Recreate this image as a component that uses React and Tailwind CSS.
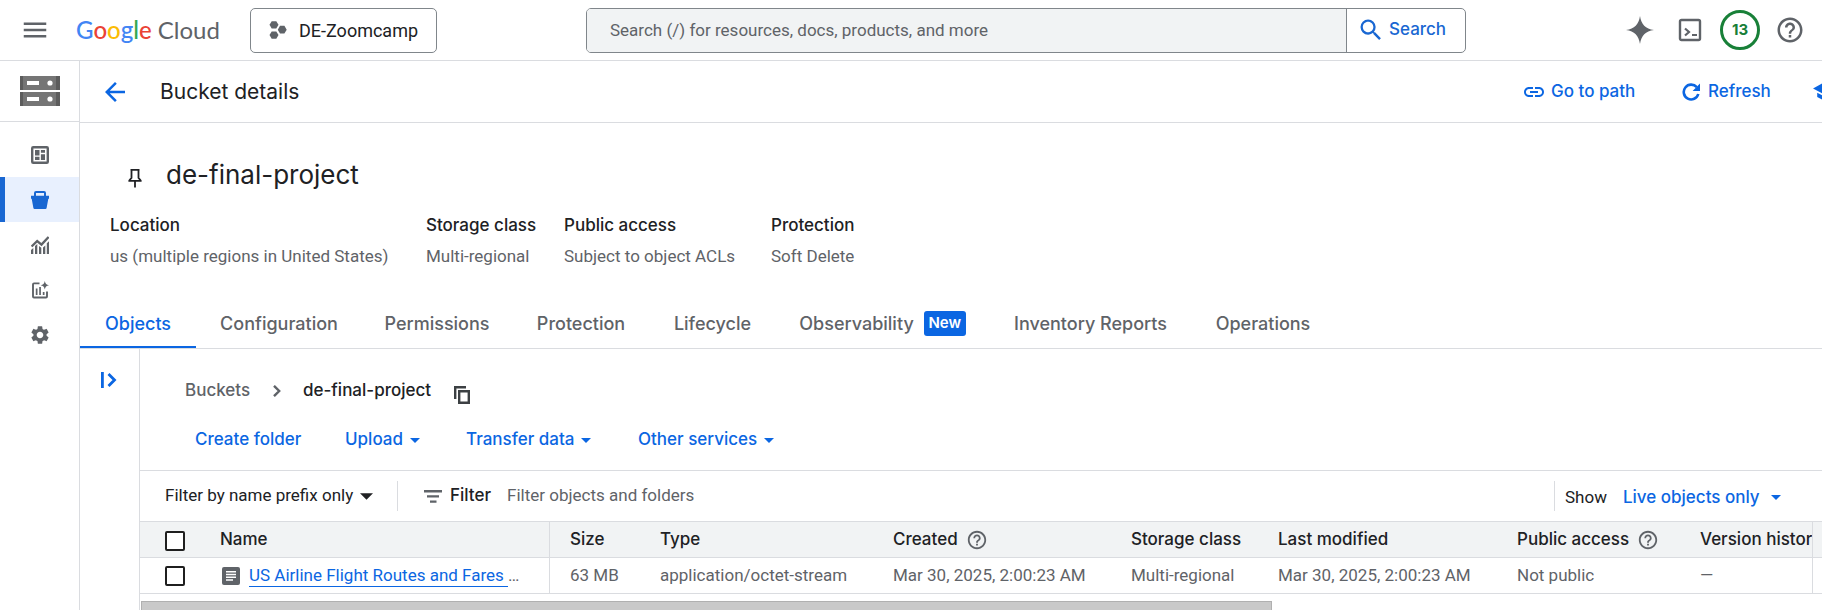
import { useState } from "react";
import {
  MdArrowBack,
  MdHelpOutline,
  MdLink,
  MdMenu,
  MdSchool,
  MdSearch,
  MdSettings,
} from "react-icons/md";

const ui = "font-['Inter','Liberation_Sans',sans-serif]";

function Caret({ className = "" }) {
  return (
    <svg viewBox="0 0 10 5" className={className} fill="currentColor" aria-hidden="true">
      <path d="M0 0h10L5 5z" />
    </svg>
  );
}

function ProjectDots() {
  return (
    <svg viewBox="0 0 18 20" className="h-5 w-[18px] shrink-0 text-[#5f6368]" fill="currentColor" aria-hidden="true">
      <path d="M2.700 1.200h4.600l2.200 3.600-2.200 3.700H2.700L.5 4.800z" />
      <path d="M2.700 11.400h4.600l2.200 3.600-2.200 3.700H2.700L.5 15z" />
      <path d="M11 5.800h4.400l2.300 3.900-2.300 3.800H11L8.800 9.700z" />
    </svg>
  );
}

function Sparkle() {
  return (
    <svg viewBox="0 0 28 28" className="size-7" fill="currentColor" aria-hidden="true">
      <path d="M14 0c1.200 8.500 5.500 12.800 14 14-8.500 1.200-12.800 5.500-14 14-1.200-8.500-5.500-12.800-14-14 8.500-1.200 12.800-5.500 14-14z" />
    </svg>
  );
}

function Terminal() {
  return (
    <svg viewBox="0 0 24 24" className="size-6" fill="none" stroke="currentColor" strokeWidth="2.400" aria-hidden="true">
      <rect x="2" y="2" width="20" height="20" rx="1.500" />
      <path d="M7 10.500l4 3.500-4 3.500M14 17h5" strokeWidth="2.200" />
    </svg>
  );
}

function PinIcon() {
  return (
    <svg viewBox="0 0 14 20" className="h-5 w-[14px]" fill="none" stroke="currentColor" strokeWidth="1.800" aria-hidden="true">
      <path d="M2.500 1.900h9M3.500 1.900v8L1.300 12.500v.4h11.400v-.4l-2.200-2.600v-8M7 13v6.500" />
    </svg>
  );
}

function StorageLogo() {
  return (
    <svg viewBox="0 0 40 30" className="h-[30px] w-10" aria-hidden="true">
      <path d="M0 0h40v14H0zM0 16h40v14H0z" fill="#757575" />
      <path d="M0 0h3v14H0zM36 0h4v14h-4zM0 16h3v14H0zM36 16h4v14h-4z" fill="#5c5c5c" />
      <path d="M7 5h12v4H7zM7 21h12v4H7z" fill="#fff" />
      <circle cx="30" cy="7" r="2.600" fill="#fff" />
      <circle cx="30" cy="23" r="2.600" fill="#fff" />
    </svg>
  );
}

function DashboardIcon() {
  return (
    <svg viewBox="0 0 18 18" className="size-[18px]" aria-hidden="true">
      <rect x="1.200" y="1.200" width="15.600" height="15.600" rx="1" fill="none" stroke="currentColor" strokeWidth="2.400" />
      <path d="M4 4h4.500v5.400H4zM4 10.800h4.500V14H4zM9.900 4H14v2.800H9.900zM9.900 8.200H14V14H9.900z" fill="currentColor" />
    </svg>
  );
}

function BucketIcon() {
  return (
    <svg viewBox="0 0 18 18" className="size-[18px]" fill="currentColor" fillRule="evenodd" aria-hidden="true">
      <path d="M5 0h8a2 2 0 0 1 2 2v2.800h3v3h-.7L15.600 17a1.200 1.200 0 0 1-1.200 1H3.600a1.200 1.200 0 0 1-1.200-1L.7 7.800H0v-3h3V2a2 2 0 0 1 2-2zm0 2v2.800h8V2z" />
    </svg>
  );
}

function MonitoringIcon() {
  return (
    <svg viewBox="0 0 18 18" className="size-[18px]" aria-hidden="true">
      <path d="M.6 10.500L6.200 5l4.300 3.600L17.600 1" fill="none" stroke="currentColor" strokeWidth="2.400" />
      <path d="M0 14l2.300-2v6H0zM4 10l2.300-2v10H4zM8 10l2.300 1.700V18H8zM12 11.400l2.300-2V18H12zM15.800 7.200l2.200-2V18h-2.200z" fill="currentColor" />
    </svg>
  );
}

function InsightsIcon() {
  return (
    <svg viewBox="0 0 18 18" className="size-[18px]" aria-hidden="true">
      <path d="M8.500 2.400H3a1 1 0 0 0-1 1V15.500a1 1 0 0 0 1 1h12a1 1 0 0 0 1-1V10.500" fill="none" stroke="currentColor" strokeWidth="1.900" />
      <path d="M4.800 7.500h1.700V14H4.800zM8.200 6h1.700v8H8.200zM11.800 11h1.700v3h-1.700z" fill="currentColor" />
      <path d="M13.800 0c.6 2.700 1.500 3.600 4.200 4.200-2.700.6-3.600 1.500-4.200 4.200-.6-2.700-1.500-3.600-4.200-4.200 2.700-.6 3.600-1.500 4.200-4.200z" fill="currentColor" />
    </svg>
  );
}

function RefreshIcon() {
  return (
    <svg viewBox="0 0 18 18" className="size-[18px]" aria-hidden="true">
      <path d="M14.800 4.200A7.400 7.400 0 1 0 16.300 11" fill="none" stroke="currentColor" strokeWidth="2.600" />
      <path d="M18 .6V8h-7.400z" fill="currentColor" />
    </svg>
  );
}

function ExpandIcon() {
  return (
    <svg viewBox="0 0 16 16" className="size-4" fill="none" stroke="currentColor" strokeWidth="2.800" aria-hidden="true">
      <path d="M1.400 0v16M7.500 2l6 6-6 6" />
    </svg>
  );
}

function CopyIcon() {
  return (
    <svg viewBox="0 0 16 18" className="h-[18px] w-4" fill="none" stroke="currentColor" strokeWidth="2.400" aria-hidden="true">
      <path d="M1.200 13V1.200H12" />
      <path d="M5.200 5.200h9.600v11.600H5.200z" />
    </svg>
  );
}

function DocIcon() {
  return (
    <svg viewBox="0 0 18 18" className="size-[18px] shrink-0" aria-hidden="true">
      <rect width="18" height="18" rx="2" fill="#5f6368" />
      <path d="M4 4h10v1.400H4zM4 6.800h10v1.400H4zM4 9.600h10V11H4zM4 12.300h7v1.400H4z" fill="#fff" />
    </svg>
  );
}

function FilterIcon() {
  return (
    <svg viewBox="0 0 18 13" className="h-[13px] w-[18px] shrink-0" fill="#5f6368" aria-hidden="true">
      <path d="M0 0h18v2.400H0zM3 5.200h12v2.400H3zM6 10.400h6.500v2.400H6z" />
    </svg>
  );
}

function TickBox({ label }) {
  return (
    <input
      type="checkbox"
      aria-label={label}
      className="block size-5 appearance-none rounded-[2px] border-2 border-[#1f1f1f] bg-white checked:bg-[#0b66e2]"
    />
  );
}

function Header() {
  return (
    <header className="flex h-[61px] shrink-0 items-center border-b border-[#dadce0] pl-5 pr-3">
      <button type="button" aria-label="Main menu" className="text-[#5f6368]">
        <MdMenu size={30} />
      </button>
      <a
        href="#home"
        className="ml-[26px] w-[147px] whitespace-nowrap font-['Lato',sans-serif] text-[24px] leading-8 text-[#5f6368]"
      >
        <span className="font-medium">
          <span className="text-[#4285f4]">G</span>
          <span className="text-[#ea4335]">o</span>
          <span className="text-[#fbbc04]">o</span>
          <span className="text-[#4285f4]">g</span>
          <span className="text-[#34a853]">l</span>
          <span className="text-[#ea4335]">e</span>
        </span>{" "}
        Cloud
      </a>
      <button
        type="button"
        className="ml-[27px] flex h-[45px] w-[187px] items-center gap-3 rounded-[5px] border border-[#80868b] pl-[18px] text-[18px] text-[#202124]"
      >
        <ProjectDots />
        DE-Zoomcamp
      </button>
      <form
        role="search"
        className="ml-[149px] mr-[154px] flex h-[45px] min-w-0 flex-1 overflow-hidden rounded-[5px] border border-[#80868b]"
        onSubmit={(e) => e.preventDefault()}
      >
        <input
          type="search"
          aria-label="Search"
          placeholder="Search (/) for resources, docs, products, and more"
          className="min-w-0 flex-1 bg-[#f1f3f4] pl-[23px] pt-px text-[17px] outline-none placeholder:text-[#5f6368]"
        />
        <button
          type="submit"
          className={`flex w-[119px] items-center gap-1 border-l border-[#80868b] pl-[10px] text-[17px] font-medium text-[#1967d2] ${ui}`}
        >
          <MdSearch size={28} />
          Search
        </button>
      </form>
      <div className="flex items-center gap-[10px] text-[#5f6368]">
        <button type="button" aria-label="Assistant" className="flex size-10 items-center justify-center">
          <Sparkle />
        </button>
        <button type="button" aria-label="Open shell" className="flex size-10 items-center justify-center">
          <Terminal />
        </button>
        <button
          type="button"
          aria-label="13 notifications"
          className={`flex size-10 items-center justify-center rounded-full border-[3px] border-[#188038] text-[15px] font-bold text-[#188038] ${ui}`}
        >
          13
        </button>
        <button type="button" aria-label="Help" className="flex size-10 items-center justify-center">
          <MdHelpOutline size={30} />
        </button>
      </div>
    </header>
  );
}

const navItems = [
  { label: "Overview", Icon: DashboardIcon },
  { label: "Buckets", Icon: BucketIcon, active: true },
  { label: "Monitoring", Icon: MonitoringIcon },
  { label: "Insights", Icon: InsightsIcon },
  { label: "Settings", Icon: () => <MdSettings size={22} /> },
];

function Sidebar() {
  return (
    <aside className="w-20 shrink-0 border-r border-[#dadce0]">
      <a href="#storage" aria-label="Cloud Storage" className="flex h-[61px] items-center justify-center border-b border-[#dadce0]">
        <StorageLogo />
      </a>
      <nav className="mt-[10px]">
        {navItems.map(({ label, Icon, active }) => (
          <a
            key={label}
            href={`#${label.toLowerCase()}`}
            aria-label={label}
            className={
              active
                ? "flex h-[45px] items-center justify-center border-l-[5px] border-[#1967d2] bg-[#e8f0fe] pr-[5px] text-[#1967d2]"
                : "flex h-[45px] items-center justify-center text-[#5f6368]"
            }
          >
            <Icon />
          </a>
        ))}
      </nav>
    </aside>
  );
}

const facts = [
  ["Location", "us (multiple regions in United States)"],
  ["Storage class", "Multi-regional"],
  ["Public access", "Subject to object ACLs"],
  ["Protection", "Soft Delete"],
];

const tabs = [
  { label: "Objects", width: "w-[116px]" },
  { label: "Configuration", width: "w-[166px]" },
  { label: "Permissions", width: "w-[150px]" },
  { label: "Protection", width: "w-[138px]" },
  { label: "Lifecycle", width: "w-[125px]" },
  { label: "Observability", width: "w-[215px]", badge: "New" },
  { label: "Inventory Reports", width: "w-[201px]" },
  { label: "Operations", width: "w-[144px]" },
];

function Tabs() {
  const [current, setCurrent] = useState("Objects");
  return (
    <div role="tablist" className={`mt-5 flex h-[57px] border-b border-[#dadce0] text-[18px] font-medium ${ui}`}>
      {tabs.map(({ label, width, badge }) => (
        <button
          key={label}
          type="button"
          role="tab"
          aria-selected={current === label}
          onClick={() => setCurrent(label)}
          className={`flex shrink-0 items-center justify-center gap-[10px] whitespace-nowrap border-b-2 pt-2 ${width} ${
            current === label ? "border-[#0b66e2] text-[#0b66e2]" : "border-transparent text-[#5f6368]"
          }`}
        >
          {label}
          {badge && (
            <span className="flex h-[25px] w-[42px] items-center justify-center rounded-[3px] bg-[#0b66e2] text-[15px] font-semibold text-white">
              {badge}
            </span>
          )}
        </button>
      ))}
    </div>
  );
}

const actions = [
  { label: "Create folder", width: "w-[150px]" },
  { label: "Upload", width: "w-[121px]", menu: true },
  { label: "Transfer data", width: "w-[172px]", menu: true },
  { label: "Other services", width: "w-[160px]", menu: true },
];

const columns = [
  { label: "Size", value: "63 MB" },
  { label: "Type", value: "application/octet-stream" },
  { label: "Created", value: "Mar 30, 2025, 2:00:23 AM", help: true },
  { label: "Storage class", value: "Multi-regional" },
  { label: "Last modified", value: "Mar 30, 2025, 2:00:23 AM" },
  { label: "Public access", value: "Not public", help: true },
  { label: "Version history", value: "—" },
];

function ObjectTable() {
  return (
    <table className="w-full table-fixed border-separate border-spacing-0 text-left">
      <colgroup>
        <col className="w-[60px]" />
        <col className="w-[350px]" />
        <col className="w-[90px]" />
        <col className="w-[233px]" />
        <col className="w-[238px]" />
        <col className="w-[147px]" />
        <col className="w-[239px]" />
        <col className="w-[183px]" />
        <col className="w-[132px]" />
        <col />
      </colgroup>
      <thead className={`bg-[#f1f3f4] text-[17px] text-[#202124] ${ui}`}>
        <tr className="h-9">
          <th className="border-b border-[#dadce0] p-0 pl-[25px] pt-[2px]">
            <TickBox label="Select all objects" />
          </th>
          <th className="border-b border-r border-[#dadce0] p-0 pl-5 font-medium">Name</th>
          {columns.map(({ label, help }) => (
            <th
              key={label}
              className="overflow-hidden whitespace-nowrap border-b border-[#dadce0] p-0 pl-5 font-medium"
            >
              <span className="flex items-center gap-2">
                {label}
                {help && <MdHelpOutline size={22} className="shrink-0 text-[#5f6368]" />}
              </span>
            </th>
          ))}
          <td className="border-b border-l border-[#dadce0] p-0" />
        </tr>
      </thead>
      <tbody className="text-[17px] text-[#5f6368]">
        <tr className="h-9">
          <td className="border-b border-[#dadce0] p-0 pl-[25px]">
            <TickBox label="Select US Airline Flight Routes and Fares" />
          </td>
          <td className="border-b border-r border-[#dadce0] p-0 pl-[22px]">
            <span className="flex items-center gap-[9px]">
              <DocIcon />
              <span className="whitespace-nowrap">
                <a href="#object" className="inline-block whitespace-pre border-b border-[#0b66e2] leading-[21px] text-[#0b66e2]">
                  {"US Airline Flight Routes and Fares "}
                </a>
                …
              </span>
            </span>
          </td>
          {columns.map(({ label, value }) => (
            <td key={label} className="whitespace-nowrap border-b border-[#dadce0] p-0 pl-5">
              {value}
            </td>
          ))}
          <td className="border-b border-l border-[#dadce0] p-0" />
        </tr>
      </tbody>
    </table>
  );
}

function Browser() {
  return (
    <section className="min-w-0 flex-1">
      <div className="h-[122px] border-b border-[#dadce0] pt-[29px]">
        <nav aria-label="Breadcrumb" className={`flex h-[26px] items-center pl-[45px] text-[17px] font-medium ${ui}`}>
          <a href="#buckets" className="w-[66px] text-[#5f6368]">Buckets</a>
          <svg viewBox="0 0 8 12" className="ml-[22px] h-3 w-2" fill="none" stroke="#5f6368" strokeWidth="2.400" aria-hidden="true">
            <path d="M1 .8L6.200 6 1 11.200" />
          </svg>
          <span className="ml-[22px] w-[136px] whitespace-nowrap text-[#202124]">de-final-project</span>
          <button type="button" aria-label="Copy path" className="ml-[15px] self-end text-[#3c4043]">
            <CopyIcon />
          </button>
        </nav>
        <div className={`mt-[23px] flex h-[26px] items-center pl-[55px] text-[17px] font-medium text-[#0b66e2] ${ui}`}>
          {actions.map(({ label, width, menu }) => (
            <button key={label} type="button" className={`flex shrink-0 items-center gap-[7px] whitespace-nowrap ${width}`}>
              {label}
              {menu && <Caret className="h-[5px] w-[10px]" />}
            </button>
          ))}
        </div>
      </div>
      <div className="flex h-[51px] items-center border-b border-[#dadce0] text-[#202124]">
        <button type="button" className="ml-[25px] flex w-[214px] items-center gap-[7px] whitespace-nowrap text-[17px]">
          Filter by name prefix only
          <Caret className="h-[7px] w-[13px]" />
        </button>
        <span className="ml-[18px] h-[30px] w-px bg-[#dadce0]" />
        <label htmlFor="filter" className={`ml-[26px] flex items-center gap-2 text-[17px] font-medium ${ui}`}>
          <FilterIcon />
          Filter
        </label>
        <input
          id="filter"
          placeholder="Filter objects and folders"
          className="ml-4 min-w-0 flex-1 text-[17px] outline-none placeholder:text-[#5f6368]"
        />
        <span className="h-[30px] w-px bg-[#dadce0]" />
        <div className="flex w-[267px] items-center gap-4 pl-[10px] pt-[3px]">
          <span className="text-[17px]">Show</span>
          <button type="button" className={`flex items-center gap-[11px] whitespace-nowrap text-[17px] font-medium text-[#0b66e2] ${ui}`}>
            Live objects only
            <Caret className="h-[5px] w-[10px]" />
          </button>
        </div>
      </div>
      <ObjectTable />
      <div className="pl-px pt-[7px]">
        <div className="h-[9px] w-[67.3%] border border-b-0 border-[#b0b0b0] bg-[#c9c9c9]" />
      </div>
    </section>
  );
}

export default function App() {
  return (
    <div className="flex min-h-screen flex-col overflow-hidden bg-white font-['Roboto','Liberation_Sans',sans-serif] text-[#202124]">
      <Header />
      <div className="flex min-w-0 flex-1">
        <Sidebar />
        <main className="flex min-w-0 flex-1 flex-col">
          <div className={`flex h-[62px] shrink-0 items-center overflow-hidden border-b border-[#dadce0] pl-5 ${ui}`}>
            <a href="#back" aria-label="Back" className="text-[#0b66e2]">
              <MdArrowBack size={30} />
            </a>
            <h1 className="ml-[30px] flex-1 text-[21px]">Bucket details</h1>
            <div className="flex w-[300px] shrink-0 items-center text-[17px] font-medium text-[#0b66e2]">
              <button type="button" className="flex w-[160px] shrink-0 items-center gap-[5px] whitespace-nowrap">
                <MdLink size={24} />
                Go to path
              </button>
              <button type="button" className="flex w-[130px] shrink-0 items-center gap-2">
                <RefreshIcon />
                Refresh
              </button>
              <button type="button" aria-label="Learn" className="shrink-0">
                <MdSchool size={25} />
              </button>
            </div>
          </div>
          <div className="flex items-center gap-6 pl-12 pt-[32px]">
            <button type="button" aria-label="Pin bucket" className="pt-[6px] text-[#202124]">
              <PinIcon />
            </button>
            <h2 className={`text-[26px] leading-10 ${ui}`}>de-final-project</h2>
          </div>
          <dl className="mt-[15px] grid grid-cols-[286px_108px_177px_auto] justify-start gap-x-[30px] pl-[30px]">
            {facts.map(([term, value]) => (
              <div key={term} className="whitespace-nowrap">
                <dt className={`text-[17px] font-medium leading-[30px] ${ui}`}>{term}</dt>
                <dd className="text-[17px] leading-[32px] text-[#5f6368]">{value}</dd>
              </div>
            ))}
          </dl>
          <Tabs />
          <div className="flex min-w-0 flex-1">
            <div className="w-[60px] shrink-0 border-r border-[#dadce0] pl-[21px] pt-[22px]">
              <button type="button" aria-label="Show folder browser" className="text-[#0b66e2]">
                <ExpandIcon />
              </button>
            </div>
            <Browser />
          </div>
        </main>
      </div>
    </div>
  );
}
